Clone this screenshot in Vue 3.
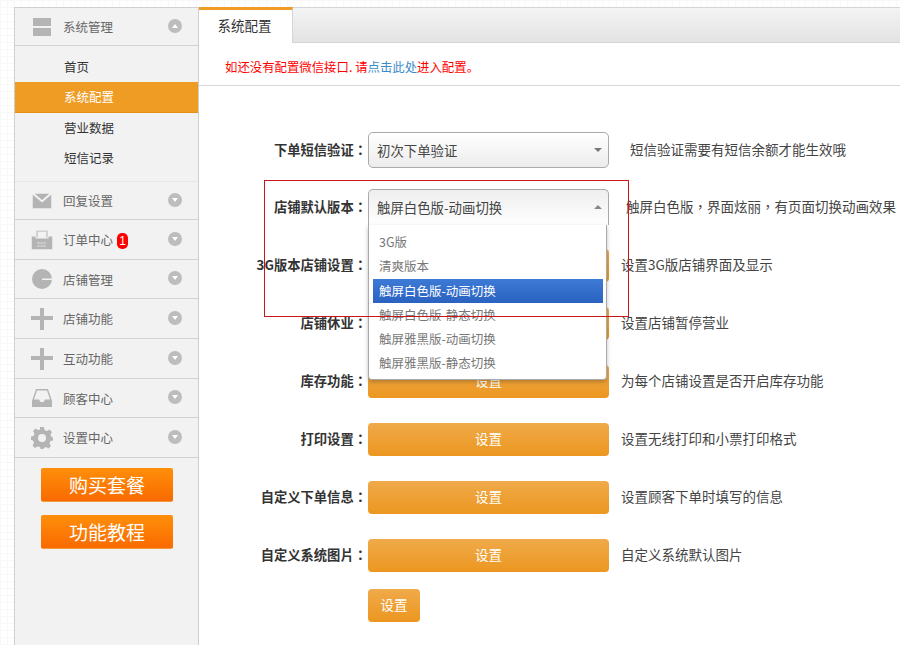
<script setup>
const icons = {
  grid: 'M0 0H18V8H0ZM0 10H18V18H0Z',
  mail: 'M0 1L9.500 9L19 1V15H0ZM2 0H17L9.500 6.500Z',
  printer: 'M5 0H16V7H15V1H6V7H5ZM0 6H4V8H17V6H21V19H0ZM6 12V13H8V12ZM9 12V13H11V12ZM12 12V13H14V12ZM6 15V16H8V15ZM9 15V16H11V15ZM12 15V16H14V15Z',
  pie: 'M10 0A10 10 0 1 1 10 20A10 10 0 1 1 10 0ZM10 9.500V11H20V9.500Z',
  plus: 'M9 0H13V8H22V12H13V22H9V12H0V8H9Z',
  inbox: 'M4 0H16L20 12V18H0V12ZM5 1.500L2 10.500H7L8.500 13H11.500L13 10.500H18L15 1.500Z',
  gear: 'M9 0H13L13.500 3L16 4L18.500 2.500L21 5L19.500 7.500L20.500 10L22 10.500V13.500L19.500 14L18.500 16.500L20 19L17.500 21.500L15 20L13 21L12.500 22H9.500L9 20L6.500 19.500L4 21L1.500 18.500L3 16L2 13.500L0 13V9.500L2.500 9L3.500 6.500L2 4L4.500 1.500L7 3L9 2.500ZM11 7A4 4 0 1 0 11 15A4 4 0 1 0 11 7Z'
}
const groups = [
  { name: '回复设置', icon: 'mail', w: 19, h: 15, cls: 'h38' },
  { name: '订单中心', icon: 'printer', w: 21, h: 19, badge: '1', cls: 'h40' },
  { name: '店铺管理', icon: 'pie', w: 20, h: 20, cls: 'h39' },
  { name: '店铺功能', icon: 'plus', w: 22, h: 22, cls: 'h40' },
  { name: '互动功能', icon: 'plus', w: 22, h: 22, cls: 'h40' },
  { name: '顾客中心', icon: 'inbox', w: 20, h: 18, cls: 'h39' },
  { name: '设置中心', icon: 'gear', w: 22, h: 22, cls: 'h40' }
]
const subs = ['首页', '系统配置', '营业数据', '短信记录']
const rows = [
  { label: '3G版本店铺设置：', desc: '设置3G版店铺界面及显示' },
  { label: '店铺休业：', desc: '设置店铺暂停营业' },
  { label: '库存功能：', desc: '为每个店铺设置是否开启库存功能' },
  { label: '打印设置：', desc: '设置无线打印和小票打印格式' },
  { label: '自定义下单信息：', desc: '设置顾客下单时填写的信息' },
  { label: '自定义系统图片：', desc: '自定义系统默认图片' }
]
const options = ['3G版', '清爽版本', '触屏白色版-动画切换', '触屏白色版-静态切换', '触屏雅黑版-动画切换', '触屏雅黑版-静态切换']
</script>

<template>
  <div class="page">
    <aside class="side">
      <div class="head first">
        <svg class="ico" width="18" height="18" viewBox="0 0 18 18"><path :d="icons.grid" /></svg>
        <span class="name">系统管理</span>
        <span class="chev"><i class="up"></i></span>
      </div>
      <ul class="subs">
        <li v-for="(s, i) in subs" :key="s" :class="{ on: i === 1 }">{{ s }}</li>
      </ul>
      <div v-for="g in groups" :key="g.name" class="head" :class="g.cls">
        <svg class="ico" :width="g.w" :height="g.h" :viewBox="`0 0 ${g.w} ${g.h}`"><path fill-rule="evenodd" :d="icons[g.icon]" /></svg>
        <span class="name">{{ g.name }}</span>
        <span v-if="g.badge" class="badge">{{ g.badge }}</span>
        <span class="chev"><i></i></span>
      </div>
      <div class="promo">
        <a>购买套餐</a>
        <a>功能教程</a>
      </div>
    </aside>

    <main class="main">
      <div class="tabs"><span class="tab">系统配置</span></div>
      <p class="note">如还没有配置微信接口. 请<a>点击此处</a>进入配置。</p>

      <div class="form">
        <div class="row r1">
          <label>下单短信验证：</label>
          <div class="select"><span>初次下单验证</span><i class="arrow"></i></div>
          <span class="desc d1">短信验证需要有短信余额才能生效哦</span>
        </div>
        <div class="row r2">
          <label>店铺默认版本：</label>
          <div class="select open"><span>触屏白色版-动画切换</span><i class="arrow up"></i></div>
          <span class="desc d2">触屏白色版，界面炫丽，有页面切换动画效果</span>
          <ul class="menu">
            <li v-for="(o, i) in options" :key="o" :class="{ sel: i === 2 }">{{ o }}</li>
          </ul>
        </div>
        <div v-for="r in rows" :key="r.label" class="row">
          <label>{{ r.label }}</label>
          <button class="btn">设置</button>
          <span class="desc">{{ r.desc }}</span>
        </div>
        <div class="row last">
          <label></label>
          <button class="btn small">设置</button>
        </div>
        <div class="redbox"></div>
      </div>
    </main>
  </div>
</template>

<style>
html, body { margin: 0; background: #fff; }
</style>

<style scoped>
.page {
  width: 900px;
  height: 645px;
  box-sizing: border-box;
  padding: 7px 0 0 14px;
  display: flex;
  overflow: hidden;
  font-family: "Noto Sans CJK SC", "Liberation Sans", sans-serif;
  background-color: #fff;
  background-image:
    linear-gradient(#f8f8f8 1px, transparent 1px),
    linear-gradient(90deg, #f8f8f8 1px, transparent 1px);
  background-size: 7px 7px;
}
.side {
  width: 185px;
  flex: none;
  box-sizing: border-box;
  background: #f2f2f2;
  border: 1px solid #d0d0d0;
  border-bottom: 0;
  border-right-color: #cfcfcf;
}
.head {
  display: flex;
  align-items: center;
  position: relative;
  box-sizing: border-box;
  border-bottom: 1px solid #d2d2d2;
}
.first { height: 38px; }
.h38 { height: 38px; }
.h39 { height: 39px; }
.h40 { height: 40px; }
.ico {
  fill: #b4b4b4;
  position: absolute;
  left: 27px;
  top: 50%;
  transform: translate(-50%, -50%);
}
.name {
  margin-left: 48px;
  font-size: 12.5px;
  color: #666;
}
.badge {
  margin: 3px 0 0 4px;
  width: 11px;
  height: 16px;
  border-radius: 5px;
  background: #f00;
  color: #fff;
  font: 12px/16px "Liberation Sans", sans-serif;
  text-align: center;
}
.chev {
  position: absolute;
  left: 153px;
  top: 50%;
  margin-top: -8px;
  width: 14px;
  height: 14px;
  border-radius: 50%;
  background: #bdbdbd;
  display: flex;
  align-items: center;
  justify-content: center;
}
.chev i {
  width: 0;
  height: 0;
  border: 3.5px solid transparent;
  border-top: 4px solid #fff;
  border-bottom: 0;
}
.chev i.up {
  border-top: 0;
  border-bottom: 4px solid #fff;
}
.subs {
  list-style: none;
  margin: 0;
  padding: 6px 0 9px;
  height: 136px;
  box-sizing: border-box;
  border-bottom: 1px solid #e6e6e6;
}
.subs li {
  height: 30.300px;
  line-height: 30px;
  padding-left: 49px;
  font-size: 12.5px;
  color: #333;
}
.subs li.on {
  background: #ef9c25;
  color: #fff;
  border-bottom: 1px solid #e58f16;
  box-sizing: border-box;
}
.promo {
  padding: 10px 0 0 26px;
  display: flex;
  flex-direction: column;
  gap: 13px;
}
.promo a {
  width: 132px;
  height: 34px;
  box-sizing: border-box;
  border-radius: 2px;
  background: linear-gradient(#ff8f0a, #f96a00);
  border-bottom: 1px solid #f29a3c;
  color: #fff;
  font-size: 19px;
  line-height: 33px;
  text-align: center;
}
.main {
  width: 701px;
  flex: none;
  position: relative;
}
.tabs {
  height: 36px;
  border-top: 1px solid #d5d5d5;
  box-sizing: border-box;
  background: linear-gradient(#f4f4f4, #e3e3e3);
  border-bottom: 1px solid #d5d5d5;
  display: flex;
}
.tab {
  width: 94px;
  height: 36px;
  margin-top: -1px;
  box-sizing: border-box;
  border-top: 3px solid #ef9c25;
  border-right: 1px solid #d5d5d5;
  background: #fff;
  color: #333;
  font-size: 13.5px;
  line-height: 30px;
  padding-right: 2px;
  text-align: center;
}
.note {
  margin: 0;
  height: 43px;
  box-sizing: border-box;
  border-bottom: 1px solid #d8d8d8;
  padding-left: 26px;
  font-size: 12.4px;
  line-height: 49px;
  color: #f00;
  background: #fff;
}
.note a { color: #3a8cc8; }
.form {
  position: relative;
  background: #fff;
  height: 559px;
  padding-top: 35px;
  box-sizing: border-box;
}
.row {
  display: flex;
  align-items: center;
  height: 58px;
  position: relative;
}
.row.r2 { height: 56px; margin-bottom: 1px; }
.row.last { height: 42px; }
label {
  width: 168px;
  margin-right: 1px;
  padding-bottom: 2px;
  flex: none;
  text-align: right;
  font-family: "Noto Sans CJK TC", "Noto Sans CJK SC", sans-serif;
  font-size: 13.3px;
  font-weight: 700;
  color: #333;
}
.select {
  width: 241px;
  height: 36px;
  flex: none;
  box-sizing: border-box;
  border: 1px solid #aaa;
  border-radius: 5px;
  background: linear-gradient(#fff, #ececec);
  padding-left: 8px;
  font-size: 13.4px;
  line-height: 35px;
  color: #444;
  position: relative;
}
.select.open {
  background: linear-gradient(#eee, #fff);
  border-bottom: 0;
  border-radius: 5px 5px 0 0;
}
.arrow {
  position: absolute;
  right: 6px;
  top: 15px;
  border: 4px solid transparent;
  border-top: 4px solid #777;
  border-bottom: 0;
}
.arrow.up {
  border-top: 0;
  border-bottom: 4px solid #888;
}
.desc {
  margin-left: 12px;
  padding-bottom: 2px;
  font-size: 13.5px;
  color: #444;
  white-space: nowrap;
}
.d1 { margin-left: 21px; }
.d2 { margin-left: 17px; font-family: "Noto Sans CJK TC", "Noto Sans CJK SC", sans-serif; }
.btn {
  width: 241px;
  height: 33px;
  flex: none;
  padding: 0 0 2px;
  border: 0;
  border-radius: 4px;
  background: linear-gradient(#f0aa4a, #ec9720);
  color: #fff;
  font: 13.5px "Noto Sans CJK SC", sans-serif;
}
.btn.small { width: 52px; }
.menu {
  list-style: none;
  margin: 0;
  padding: 5px 3px 4px 4px;
  box-sizing: border-box;
  position: absolute;
  left: 169px;
  top: 46px;
  width: 239px;
  height: 155px;
  background: #fff;
  border: 1px solid #aaa;
  border-top: 0;
  border-radius: 0 0 4px 4px;
  box-shadow: 0 2px 4px rgba(0, 0, 0, .25);
  z-index: 2;
}
.menu li {
  height: 24.300px;
  line-height: 24px;
  padding-left: 6px;
  font-size: 12.5px;
  color: #777;
}
.menu li.sel {
  background: linear-gradient(#3d7ad6, #2a62c0);
  color: #fff;
}
.redbox {
  position: absolute;
  left: 65px;
  top: 94px;
  width: 365px;
  height: 137px;
  box-sizing: border-box;
  border: 1px solid #c8161d;
  z-index: 3;
  pointer-events: none;
}
</style>
